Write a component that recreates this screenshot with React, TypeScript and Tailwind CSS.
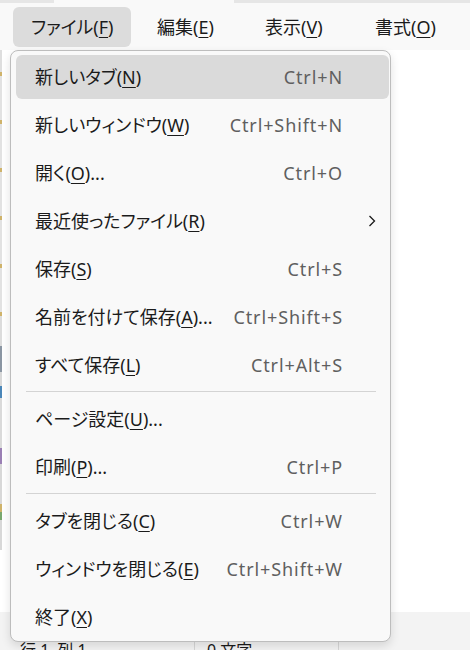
import React from 'react';

type Item =
  | { kind: 'item'; label: string; key: string; suffix?: string; shortcut?: string; submenu?: boolean; active?: boolean }
  | { kind: 'sep' };

const items: Item[] = [
  { kind: 'item', label: '新しいタブ', key: 'N', shortcut: 'Ctrl+N', active: true },
  { kind: 'item', label: '新しいウィンドウ', key: 'W', shortcut: 'Ctrl+Shift+N' },
  { kind: 'item', label: '開く', key: 'O', suffix: '...', shortcut: 'Ctrl+O' },
  { kind: 'item', label: '最近使ったファイル', key: 'R', submenu: true },
  { kind: 'item', label: '保存', key: 'S', shortcut: 'Ctrl+S' },
  { kind: 'item', label: '名前を付けて保存', key: 'A', suffix: '...', shortcut: 'Ctrl+Shift+S' },
  { kind: 'item', label: 'すべて保存', key: 'L', shortcut: 'Ctrl+Alt+S' },
  { kind: 'sep' },
  { kind: 'item', label: 'ページ設定', key: 'U', suffix: '...' },
  { kind: 'item', label: '印刷', key: 'P', suffix: '...', shortcut: 'Ctrl+P' },
  { kind: 'sep' },
  { kind: 'item', label: 'タブを閉じる', key: 'C', shortcut: 'Ctrl+W' },
  { kind: 'item', label: 'ウィンドウを閉じる', key: 'E', shortcut: 'Ctrl+Shift+W' },
  { kind: 'item', label: '終了', key: 'X' },
];

const menus = [
  { label: 'ファイル', key: 'F', w: 'w-[118px]', active: true },
  { label: '編集', key: 'E', w: 'w-[100px]' },
  { label: '表示', key: 'V', w: 'w-[102px]' },
  { label: '書式', key: 'O', w: 'w-[100px]' },
];

// 背後のウィンドウの端（左端の細い帯）
const edge = [
  ['h-[22px]', 'bg-[#dedede]'],
  ['h-[4px]', 'bg-[#cfb36a]'],
  ['h-[44px]', 'bg-[#e2e2e2]'],
  ['h-[4px]', 'bg-[#cfb36a]'],
  ['h-[44px]', 'bg-[#e2e2e2]'],
  ['h-[4px]', 'bg-[#cfb36a]'],
  ['h-[44px]', 'bg-[#e2e2e2]'],
  ['h-[4px]', 'bg-[#cfb36a]'],
  ['h-[44px]', 'bg-[#e2e2e2]'],
  ['h-[4px]', 'bg-[#cfb36a]'],
  ['h-[44px]', 'bg-[#e2e2e2]'],
  ['h-[4px]', 'bg-[#cfb36a]'],
  ['h-[30px]', 'bg-[#dcdcdc]'],
  ['h-[26px]', 'bg-[#8b96a3]'],
  ['h-[14px]', 'bg-[#d8d8d8]'],
  ['h-[12px]', 'bg-[#4a86b8]'],
  ['h-[50px]', 'bg-[#dadada]'],
  ['h-[16px]', 'bg-[#9a7fb4]'],
  ['h-[40px]', 'bg-[#d8d8d8]'],
  ['h-[8px]', 'bg-[#cfb36a]'],
  ['h-[8px]', 'bg-[#79a86e]'],
  ['h-[30px]', 'bg-[#d8d8d8]'],
];

function Accel({ label, k, suffix }: { label: string; k: string; suffix?: string }) {
  return (
    <span>
      {label}(<span className="underline underline-offset-[3px] decoration-[1px]">{k}</span>){suffix}
    </span>
  );
}

function Chevron() {
  return (
    <svg width="8" height="12" viewBox="0 0 8 12" fill="none">
      <path d="M1.5 1 L6.5 6 L1.5 11" stroke="#1b1b1b" strokeWidth="1.3" />
    </svg>
  );
}

export default function App() {
  return (
    <div className="relative w-[470px] h-[650px] overflow-hidden bg-white text-[#1b1b1b] font-['Noto_Sans','Noto_Sans_CJK_JP',sans-serif] text-[18px] [font-feature-settings:'palt']">
      <div className="flex flex-col h-full">
        {/* tab strip */}
        <div className="flex h-[3px] shrink-0">
          <div className="w-[54px] bg-[#e6e6e6]" />
          <div className="w-[180px] bg-[#f9f9f9]" />
          <div className="flex-1 bg-[#e6e6e6]" />
        </div>

        {/* menu bar */}
        <div className="flex h-[47px] shrink-0 bg-[#f9f9f9] pl-[13px] pt-[4px] gap-[8px]">
          {menus.map((m) => (
            <div
              key={m.label}
              className={`${m.w} h-[40px] flex items-center pl-[18px] rounded-[6px] ${m.active ? 'bg-[#dcdcdc]' : ''}`}
            >
              <Accel label={m.label} k={m.key} />
            </div>
          ))}
        </div>

        {/* editor */}
        <div className="flex flex-1 min-h-0">
          <div className="w-[2px] flex flex-col overflow-hidden">
            {edge.map(([h, bg], i) => (
              <div key={i} className={`${h} ${bg} shrink-0`} />
            ))}
          </div>
          <div className="flex-1 bg-white" />
        </div>

        {/* status bar */}
        <div className="flex h-[38px] shrink-0 bg-[#f3f3f3] text-[16px] pt-[28px] leading-[20px]">
          <div className="w-[195px] pl-[20px] border-r border-[#d6d6d6]">行 1、列 1</div>
          <div className="w-[144px] pl-[12px] border-r border-[#d6d6d6]">0 文字</div>
          <div className="flex-1" />
        </div>
      </div>

      {/* dropdown menu */}
      <div className="absolute left-[10px] top-[50px] w-[381px] h-[592px] bg-[#f9f9f9] border border-[#bdbdbd] rounded-[8px] shadow-[0_4px_10px_rgba(0,0,0,0.12)] pt-[2px]">
        {items.map((it, i) =>
          it.kind === 'sep' ? (
            <div key={i} className="h-[6px] pt-[2px] pl-[15px] pr-[14px]">
              <div className="h-px bg-[#d4d4d4]" />
            </div>
          ) : (
            <div key={i} className="h-[48px] py-[2px] pl-[5px] pr-[1px]">
              <div className={`h-[44px] rounded-[6px] flex items-center pl-[19px] ${it.active ? 'bg-[#dadada]' : ''}`}>
                <div className="flex-1 whitespace-nowrap">
                  <Accel label={it.label} k={it.key} suffix={it.suffix} />
                </div>
                {it.shortcut && (
                  <div className="text-[#5f5f5f] whitespace-nowrap tracking-[0.9px] mr-[-1px]">{it.shortcut}</div>
                )}
                <div className="w-[47px] flex items-center pl-[26px]">{it.submenu && <Chevron />}</div>
              </div>
            </div>
          )
        )}
      </div>
    </div>
  );
}
